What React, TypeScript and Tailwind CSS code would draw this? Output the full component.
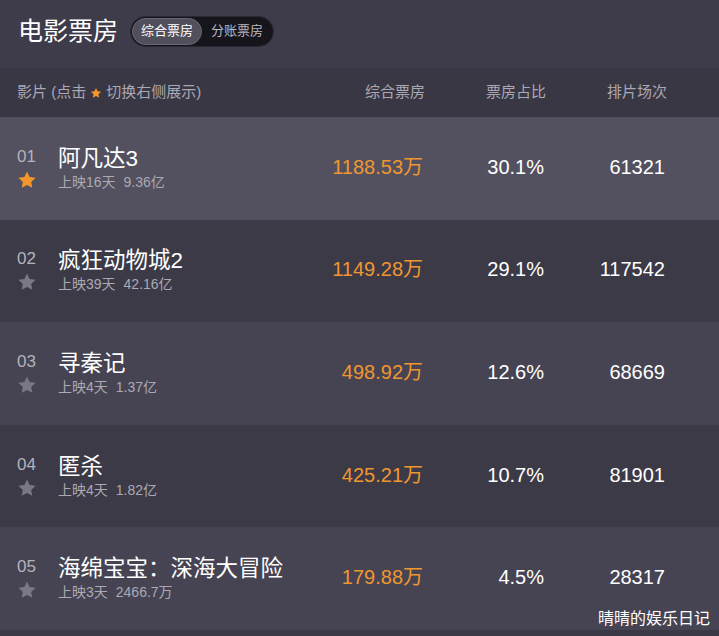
import React from "react";

type Movie = {
  rank: string;
  name: string;
  days: string;
  total: string;
  boxOffice: string;
  share: string;
  shows: string;
};

const MOVIES: Movie[] = [
  { rank: "01", name: "阿凡达3", days: "上映16天", total: "9.36亿", boxOffice: "1188.53万", share: "30.1%", shows: "61321" },
  { rank: "02", name: "疯狂动物城2", days: "上映39天", total: "42.16亿", boxOffice: "1149.28万", share: "29.1%", shows: "117542" },
  { rank: "03", name: "寻秦记", days: "上映4天", total: "1.37亿", boxOffice: "498.92万", share: "12.6%", shows: "68669" },
  { rank: "04", name: "匿杀", days: "上映4天", total: "1.82亿", boxOffice: "425.21万", share: "10.7%", shows: "81901" },
  { rank: "05", name: "海绵宝宝：深海大冒险", days: "上映3天", total: "2466.7万", boxOffice: "179.88万", share: "4.5%", shows: "28317" },
];

const ROW_BG = ["bg-[#53515f]", "bg-[#3c3a47]", "bg-[#464453]", "bg-[#3c3a47]", "bg-[#464453]"];

function Star({ className }: { className: string }) {
  return (
    <svg viewBox="0 0 24 24" className={className} aria-hidden>
      <path
        d="M12 1.8l3.1 6.6 7.2.9-5.3 5 1.4 7.1L12 17.9l-6.4 3.5L7 14.3l-5.3-5 7.2-.9z"
        fill="currentColor"
      />
    </svg>
  );
}

export default function App() {
  return (
    <div
      className="relative h-[636px] w-[719px] overflow-hidden bg-[#3b3946] text-white"
      style={{ fontFamily: '"Liberation Sans", "Noto Sans CJK SC", sans-serif' }}
    >
      {/* 顶部标题 + 切换 */}
      <div className="flex h-[68px] items-center bg-[#3e3b4a] pl-[18px] pb-[6px]">
        <h1 className="text-[25px] leading-none text-white">电影票房</h1>
        <div className="ml-[12px] flex h-[31px] items-center rounded-full border border-[#2a2832] bg-[#17151c] px-[1px]">
          <span className="flex h-[27px] w-[70px] items-center justify-center rounded-full border border-[#6a6875] bg-[#514f5c] text-[13px] text-white">
            综合票房
          </span>
          <span className="flex h-[27px] w-[70px] items-center justify-center text-[13px] text-[#b9b7c0]">
            分账票房
          </span>
        </div>
      </div>

      {/* 表头 */}
      <div className="flex h-[49px] items-center bg-[#393744] pr-[52px] text-[15px] text-[#aaa8b3]">
        <div className="flex flex-1 items-center pl-[17px]">
          影片 (点击
          <Star className="mx-[4px] h-[12px] w-[12px] text-[#f3962c]" />
          切换右侧展示)
        </div>
        <div className="w-[120px] text-right">综合票房</div>
        <div className="w-[121px] text-right">票房占比</div>
        <div className="w-[121px] text-right">排片场次</div>
      </div>

      {/* 列表 */}
      {MOVIES.map((m, i) => (
        <div
          key={m.rank}
          className={`flex h-[102.6px] items-center pr-[54px] ${ROW_BG[i]}`}
        >
          <div className="flex w-[58px] flex-col items-start pl-[17px]">
            <span className="text-[17px] leading-[20px] text-[#b4b2bc]">{m.rank}</span>
            <Star
              className={`mt-[3px] h-[20px] w-[20px] ${i === 0 ? "text-[#f3962c]" : "text-[#7a7884]"}`}
            />
          </div>
          <div className="flex flex-1 flex-col pb-[2px]">
            <span className="text-[22.5px] leading-[28px] text-white">{m.name}</span>
            <span className="mt-[1px] text-[14px] leading-[16px] text-[#aba9b3]">
              {m.days}
              <span className="ml-[8px]">{m.total}</span>
            </span>
          </div>
          <div className="w-[120px] pb-[3px] text-right text-[20px] text-[#f0962f]">{m.boxOffice}</div>
          <div className="w-[121px] pb-[3px] text-right text-[20px] text-white">{m.share}</div>
          <div className="w-[121px] pb-[3px] text-right text-[20px] text-white">{m.shows}</div>
        </div>
      ))}

      {/* 水印 */}
      <div className="absolute bottom-[9px] right-[9px] text-[16px] leading-none text-white">
        晴晴的娱乐日记
      </div>
    </div>
  );
}
